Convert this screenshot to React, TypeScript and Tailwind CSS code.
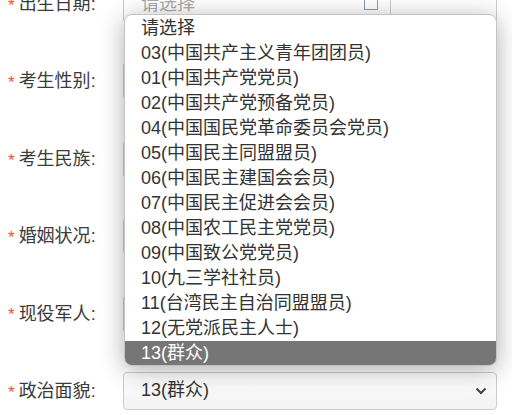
import React from 'react';

const options = [
  '请选择',
  '03(中国共产主义青年团团员)',
  '01(中国共产党党员)',
  '02(中国共产党预备党员)',
  '04(中国国民党革命委员会党员)',
  '05(中国民主同盟盟员)',
  '06(中国民主建国会会员)',
  '07(中国民主促进会会员)',
  '08(中国农工民主党党员)',
  '09(中国致公党党员)',
  '10(九三学社社员)',
  '11(台湾民主自治同盟盟员)',
  '12(无党派民主人士)',
  '13(群众)',
];

const labels = ['出生日期', '考生性别', '考生民族', '婚姻状况', '现役军人', '政治面貌'];

function Label({text}: {text: string}) {
  return (
    <div className="w-[123px] shrink-0 flex items-center pl-[8px] text-[18px] text-[#3b3b3b]">
      <span className="text-[#ff4d2e] text-[17px] mr-[4px] mt-[3px]">*</span>
      <span className="mt-[1px]">{text}:</span>
    </div>
  );
}

export default function App() {
  return (
    <div
      className="relative w-[512px] h-[415px] overflow-hidden bg-white"
      style={{fontFamily: '"Liberation Sans", "Noto Sans CJK SC", sans-serif'}}
    >
      <div className="flex flex-col gap-y-[39.4px] -mt-[15px]">
        {labels.map((l, i) => (
          <div key={l} className="flex h-[38px]">
            <Label text={l}/>
            {i === 0 ? (
              <div className="flex w-[374px] border border-[#ccc] rounded-[4px] bg-white">
                <div className="flex-1 flex items-center pl-[17px] text-[18px] text-[#aaa] relative">
                  请选择
                  <div className="absolute right-[12px] top-[13px] w-[14px] h-[11px] border border-[#8a9ab5]"/>
                </div>
                <div className="w-[106px] border-l border-[#ccc]"/>
              </div>
            ) : (
              <div
                className="flex items-center justify-between w-[374px] border border-[#ccc] rounded-[4px] bg-gradient-to-b from-white to-[#f2f2f2] pl-[17px] pr-[9px] text-[18px] text-[#333]">
                <span>{i === 5 ? '13(群众)' : ''}</span>
                {i === 5 && (
                  <svg width="12" height="8" viewBox="0 0 12 8">
                    <path d="M1.5 1.5 L6 6 L10.5 1.5" fill="none" stroke="#444" strokeWidth="2"/>
                  </svg>
                )}
              </div>
            )}
          </div>
        ))}
      </div>

      <div
        className="absolute left-[124px] top-[14px] w-[373px] h-[352px] bg-white border border-[#c4c4c4] rounded-[8px] overflow-hidden shadow-[0_4px_24px_rgba(0,0,0,0.32)] text-[18px] text-[#333] pt-[1px]">
        {options.map((o, i) => (
          <div
            key={o}
            className={`leading-[25px] pl-[16px] ${i === options.length - 1 ? 'bg-[#767676] text-white h-[26px]' : 'h-[25px]'}`}
          >
            {o}
          </div>
        ))}
      </div>
    </div>
  );
}
